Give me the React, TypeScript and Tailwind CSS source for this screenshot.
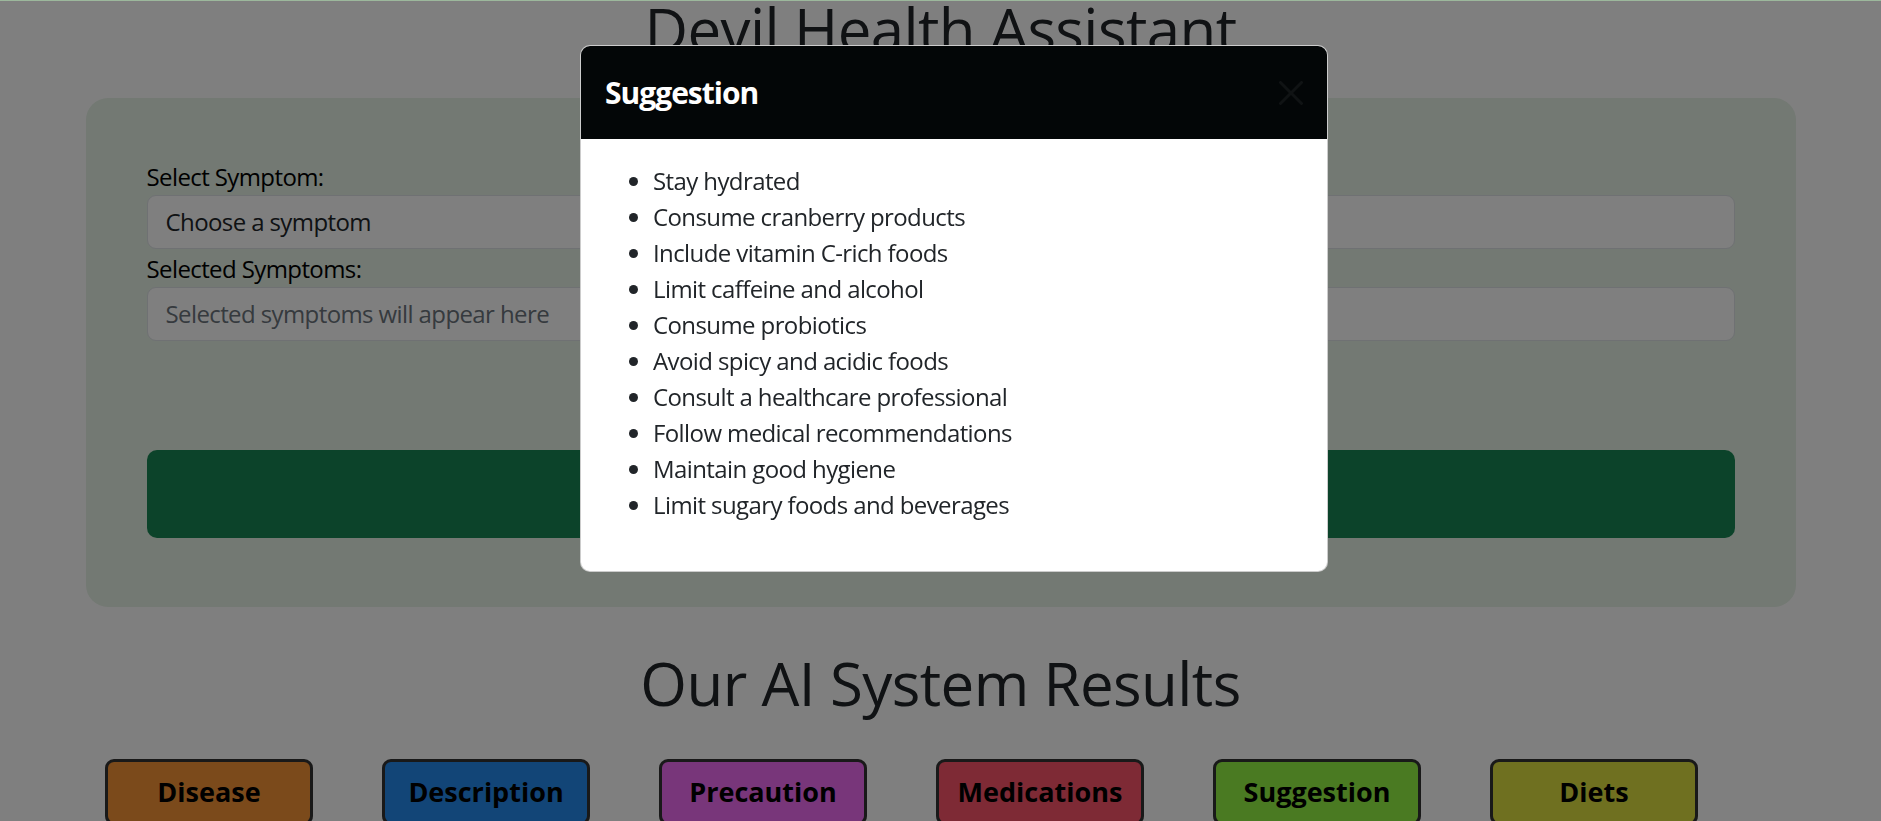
import React from "react";

const suggestions = [
    "Stay hydrated",
    "Consume cranberry products",
    "Include vitamin C-rich foods",
    "Limit caffeine and alcohol",
    "Consume probiotics",
    "Avoid spicy and acidic foods",
    "Consult a healthcare professional",
    "Follow medical recommendations",
    "Maintain good hygiene",
    "Limit sugary foods and beverages",
];

const results = [
    { label: "Disease", color: "bg-[#f69436]" },
    { label: "Description", color: "bg-[#248aee]" },
    { label: "Precaution", color: "bg-[#f06cf4]" },
    { label: "Medications", color: "bg-[#fc546a]" },
    { label: "Suggestion", color: "bg-[#94f444]" },
    { label: "Diets", color: "bg-[#dee040]" },
];

const CloseIcon = () => (
    <svg width="24" height="24" viewBox="0 0 16 16" fill="#101314">
        <path d="M.293.293a1 1 0 0 1 1.414 0L8 6.586 14.293.293a1 1 0 1 1 1.414 1.414L9.414 8l6.293 6.293a1 1 0 0 1-1.414 1.414L8 9.414l-6.293 6.293a1 1 0 0 1-1.414-1.414L6.586 8 .293 1.707a1 1 0 0 1 0-1.414z" />
    </svg>
);

const SuggestionModal = () => (
    <div className="fixed inset-0 z-50 border-t border-[#9cb89c] bg-black/50">
        <div className="absolute left-[580px] top-[44px] w-[748px] overflow-hidden rounded-[10px] border border-black/20 bg-white">
            <div className="flex h-[93px] items-center justify-between bg-[#030607] px-[24px]">
                <h5 className="text-[30px] font-bold leading-[45px] tracking-[-1px] text-white">Suggestion</h5>
                <button className="flex h-[24px] w-[24px] items-center justify-center">
                    <CloseIcon />
                </button>
            </div>
            <div className="p-[24px]">
                <ul className="mb-[24px] list-disc pl-[48px] text-[24px] leading-[36px] tracking-[-0.6px] text-[#212529]">
                    {suggestions.map(s => (
                        <li key={s}>{s}</li>
                    ))}
                </ul>
            </div>
        </div>
    </div>
);

export default function App() {
    return (
        <div className="relative h-[821px] overflow-hidden bg-white font-['Open_Sans',sans-serif] text-[#212529]">
            <h1 className="-mt-[7px] text-center text-[60px] font-medium leading-[72px] tracking-[-0.6px]">
                Devil Health Assistant
            </h1>

            <div className="mx-auto mt-[33px] w-[1710px] rounded-[22px] bg-[#e6f2e6] px-[61px] pb-[69px] pt-[61px] tracking-[-0.6px]">
                <label className="block text-[24px] leading-[36px] text-black">Select Symptom:</label>
                <div className="flex h-[54px] items-center rounded-[9px] border border-[#dee2e6] bg-white px-[18px] text-[24px] text-[#212529]">
                    Choose a symptom
                </div>
                <label className="mt-[2px] block text-[24px] leading-[36px] text-black">Selected Symptoms:</label>
                <div className="flex h-[54px] items-center rounded-[9px] border border-[#dee2e6] bg-white px-[18px] text-[24px] text-[#6c757d]">
                    Selected symptoms will appear here
                </div>
                <button className="mt-[109px] flex h-[88px] w-full items-center justify-center rounded-[10px] bg-[#198754] text-[30px] text-white">
                    Predict
                </button>
            </div>

            <h1 className="mt-[40px] text-center text-[60px] font-medium leading-[72px] tracking-[-0.6px]">
                Our AI System Results
            </h1>

            <div className="mt-[40px] flex gap-[69px] pl-[105px]">
                {results.map(r => (
                    <button
                        key={r.label}
                        className={`flex h-[66px] w-[208px] shrink-0 items-center justify-center rounded-[9px] border-[3px] border-[#333] text-[27px] font-bold text-black ${r.color}`}
                    >
                        {r.label}
                    </button>
                ))}
            </div>

            <SuggestionModal />
        </div>
    );
}
